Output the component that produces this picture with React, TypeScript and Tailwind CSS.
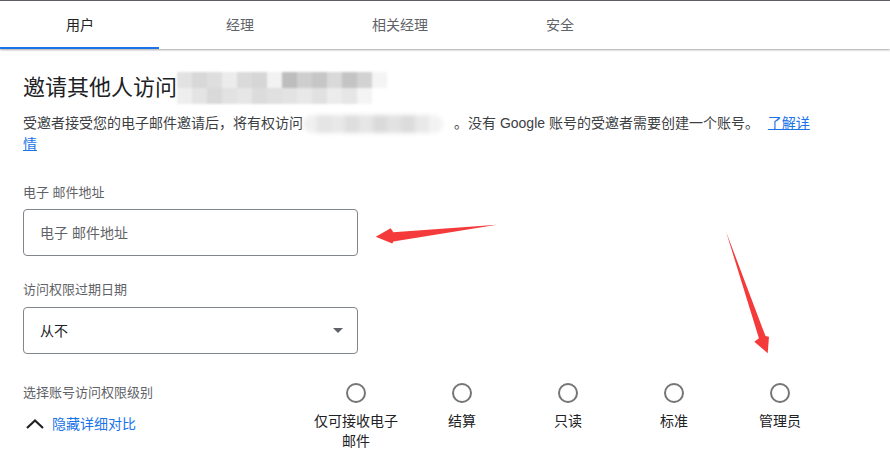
import { useState } from "react";

const tabs = ["用户", "经理", "相关经理", "安全"];

const levels = ["仅可接收电子邮件", "结算", "只读", "标准", "管理员"];

// mosaic cells standing in for the blurred-out account name
const titleMosaic = [
  ["bg-[#e2e2e2]", "bg-[#d8d8d8]", "bg-[#dedede]", "bg-[#ececec]", "bg-[#dadada]", "bg-[#d6d6d6]", "bg-[#f2f2f2]", "bg-[#bdbdbd]", "bg-[#cecece]", "bg-[#c6c6c6]", "bg-[#d9d9d9]", "bg-[#c4c4c4]", "bg-[#d2d2d2]", "bg-[#f4f4f4]"],
  ["bg-[#eeeeee]", "bg-[#e4e4e4]", "bg-[#d9d9d9]", "bg-[#e2e2e2]", "bg-[#e6e6e6]", "bg-[#dcdcdc]", "bg-[#e0e0e0]", "bg-[#e3e3e3]", "bg-[#e8e8e8]", "bg-[#e1e1e1]", "bg-[#ececec]", "bg-[#e6e6e6]", "bg-[#f4f4f4]", "bg-white"],
];

const descMosaic = ["bg-[#f0f0f0]", "bg-[#e4e4e4]", "bg-[#e8e8e8]", "bg-[#dedede]", "bg-[#e6e6e6]", "bg-[#dadada]", "bg-[#e2e2e2]", "bg-[#dcdcdc]", "bg-[#e9e9e9]", "bg-[#f2f2f2]"];

function Arrows() {
  return (
    <svg className="absolute left-0 top-0 pointer-events-none" width={890} height={465}>
      <polygon
        fill="#f43a3a"
        points="375.7,236.7 390.7,228.3 393.3,232.2 497,224.8 393.3,241.4 392.3,243.5"
      />
      <polygon
        fill="#f43a3a"
        points="726,231.5 765.5,336.1 769,336.7 767.7,353.3 754.3,341.7 758.9,338.3"
      />
    </svg>
  );
}

export default function App() {
  const [active, setActive] = useState(0);
  const [level, setLevel] = useState<number | null>(null);

  return (
    <div className="relative w-[890px] h-[465px] overflow-hidden bg-white font-['Liberation_Sans','Noto_Sans_CJK_SC',sans-serif] text-[#202124]">
      <div className="h-px bg-[#5f6368]" />
      <div className="flex h-[48px] shadow-[0_1px_2px_rgba(0,0,0,0.35)]">
        {tabs.map((t, i) => (
          <button
            key={t}
            onClick={() => setActive(i)}
            className={`relative w-[160px] text-sm ${i === active ? "text-[#202124]" : "text-[#5f6368]"}`}
          >
            {t}
            {i === active && (
              <span className="absolute left-0 right-px bottom-0 h-[2px] bg-[#1a73e8]" />
            )}
          </button>
        ))}
      </div>

      <div className="px-[23px]">
        <h1 className="mt-[23px] flex items-center text-[22px] leading-[30px] font-normal">
          邀请其他人访问
          <span className="flex flex-col blur-[1px]">
            {titleMosaic.map((row, r) => (
              <span key={r} className="flex">
                {row.map((c, k) => (
                  <span key={k} className={`w-[15px] h-[16px] ${c}`} />
                ))}
              </span>
            ))}
          </span>
        </h1>

        <p className="mt-[9px] text-sm leading-[21px] text-[#3c4043] whitespace-nowrap">
          受邀者接受您的电子邮件邀请后，将有权访问
          <span className="inline-flex align-middle blur-[2px] rounded-full overflow-hidden mr-[11px]">
            {descMosaic.map((c, k) => (
              <span key={k} className={`w-[14px] h-[18px] ${c}`} />
            ))}
          </span>
          。没有 Google 账号的受邀者需要创建一个账号。{" "}
          <a className="ml-[5px] text-[#1a73e8] underline">
            了解详
            <br />情
          </a>
        </p>

        <div className="mt-[28px] text-[13px] leading-5 text-[#5f6368]">电子 邮件地址</div>
        <div className="mt-[6px] w-[335px] h-[47px] rounded border border-[#80868b] flex items-center px-4">
          <input
            placeholder="电子 邮件地址"
            className="w-full text-sm outline-none bg-transparent placeholder:text-[#5f6368]"
          />
        </div>

        <div className="mt-[24px] text-[13px] leading-5 text-[#5f6368]">访问权限过期日期</div>
        <div className="mt-[7px] w-[335px] h-[47px] rounded border border-[#80868b] flex items-center justify-between pl-4 pr-[14px]">
          <span className="text-sm">从不</span>
          <svg width="10" height="5" viewBox="0 0 10 5">
            <path d="M0 0 L5 5 L10 0 Z" fill="#5f6368" />
          </svg>
        </div>

        <div className="mt-[29px] flex">
          <div className="w-[280px]">
            <div className="text-[13px] leading-5 text-[#5f6368]">选择账号访问权限级别</div>
            <div className="mt-[11px] flex items-center text-sm leading-5 text-[#1a73e8]">
              <svg width="20" height="20" viewBox="0 0 20 20" className="mr-[8px] ml-[1px]">
                <path d="M3 14 L11 6.5 L19 14" fill="none" stroke="#202124" strokeWidth="2.2" />
              </svg>
              隐藏详细对比
            </div>
          </div>
          <div className="flex">
            {levels.map((l, i) => (
              <div key={l} className="w-[106px] flex flex-col items-center" onClick={() => setLevel(i)}>
                <span className="w-5 h-5 rounded-full border-2 border-[#757575] flex items-center justify-center">
                  {level === i && <span className="w-2.5 h-2.5 rounded-full bg-[#1a73e8]" />}
                </span>
                <span className="mt-[8px] w-[86px] text-center text-sm leading-5">{l}</span>
              </div>
            ))}
          </div>
        </div>
      </div>

      <Arrows />
    </div>
  );
}
